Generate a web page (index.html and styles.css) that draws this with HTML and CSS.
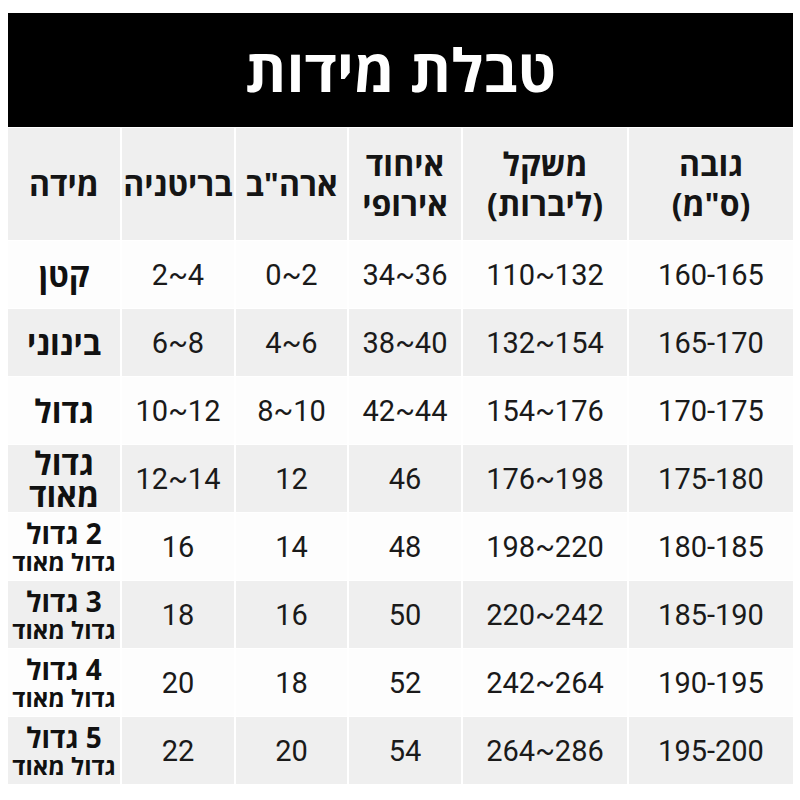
FILE: index.html
```html
<!DOCTYPE html>
<html lang="he" dir="rtl">
<head>
<meta charset="utf-8">
<title>טבלת מידות</title>
<link rel="stylesheet" href="styles.css">
</head>
<body>
<main class="sheet">
  <h1 class="title">טבלת מידות</h1>
  <div class="grid">
    <div class="cell head">גובה<br>(ס"מ)</div>
    <div class="cell head">משקל<br>(ליברות)</div>
    <div class="cell head">איחוד<br>אירופי</div>
    <div class="cell head">ארה"ב</div>
    <div class="cell head">בריטניה</div>
    <div class="cell head">מידה</div>

    <div class="cell n light">160-165</div>
    <div class="cell n light">110~132</div>
    <div class="cell n light">34~36</div>
    <div class="cell n light">0~2</div>
    <div class="cell n light">2~4</div>
    <div class="cell size light">קטן</div>

    <div class="cell n">165-170</div>
    <div class="cell n">132~154</div>
    <div class="cell n">38~40</div>
    <div class="cell n">4~6</div>
    <div class="cell n">6~8</div>
    <div class="cell size">בינוני</div>

    <div class="cell n light">170-175</div>
    <div class="cell n light">154~176</div>
    <div class="cell n light">42~44</div>
    <div class="cell n light">8~10</div>
    <div class="cell n light">10~12</div>
    <div class="cell size light">גדול</div>

    <div class="cell n">175-180</div>
    <div class="cell n">176~198</div>
    <div class="cell n">46</div>
    <div class="cell n">12</div>
    <div class="cell n">12~14</div>
    <div class="cell size two"><span>גדול</span><span>מאוד</span></div>

    <div class="cell n light">180-185</div>
    <div class="cell n light">198~220</div>
    <div class="cell n light">48</div>
    <div class="cell n light">14</div>
    <div class="cell n light">16</div>
    <div class="cell size xl light"><span class="big">2 גדול</span><span class="small">גדול מאוד</span></div>

    <div class="cell n">185-190</div>
    <div class="cell n">220~242</div>
    <div class="cell n">50</div>
    <div class="cell n">16</div>
    <div class="cell n">18</div>
    <div class="cell size xl"><span class="big">3 גדול</span><span class="small">גדול מאוד</span></div>

    <div class="cell n light">190-195</div>
    <div class="cell n light">242~264</div>
    <div class="cell n light">52</div>
    <div class="cell n light">18</div>
    <div class="cell n light">20</div>
    <div class="cell size xl light"><span class="big">4 גדול</span><span class="small">גדול מאוד</span></div>

    <div class="cell n">195-200</div>
    <div class="cell n">264~286</div>
    <div class="cell n">54</div>
    <div class="cell n">20</div>
    <div class="cell n">22</div>
    <div class="cell size xl"><span class="big">5 גדול</span><span class="small">גדול מאוד</span></div>
  </div>
</main>
</body>
</html>
```

FILE: styles.css
```css
html, body {
  margin: 0;
  padding: 0;
  background: #ffffff;
}

body {
  font-family: "Open Sans", "DejaVu Sans", sans-serif;
  color: #111111;
}

.sheet {
  width: 785px;
  margin: 13px 7px 0 8px;
  direction: rtl;
}

.title {
  margin: 0;
  height: 114px;
  background: #000000;
  color: #ffffff;
  font-family: "Open Sans", sans-serif;
  font-weight: 700;
  font-size: 59px;
  line-height: 112px;
  text-align: center;
}

.grid {
  display: grid;
  grid-template-columns: 164px 164px 112px 111px 112px 112px;
  grid-template-rows: 112px repeat(8, 67px);
  column-gap: 2px;
  row-gap: 1px;
  margin-top: 1px;
}

.cell {
  display: flex;
  align-items: center;
  justify-content: center;
  flex-direction: column;
  text-align: center;
  background: #efefef;
}

.cell.light {
  background: #fdfdfd;
}

.head {
  font-weight: 700;
  font-size: 32px;
  line-height: 40px;
  color: #151515;
}

.n {
  direction: ltr;
  font-family: Roboto, "Liberation Sans", sans-serif;
  font-size: 29px;
  color: #1a1a1a;
}

.size {
  font-weight: 700;
  font-size: 32px;
  line-height: 34px;
  color: #111111;
}

.size.two {
  line-height: 32px;
}

.xl .big {
  font-size: 28px;
  line-height: 30px;
}

.xl .small {
  font-size: 24px;
  line-height: 27px;
}
```
